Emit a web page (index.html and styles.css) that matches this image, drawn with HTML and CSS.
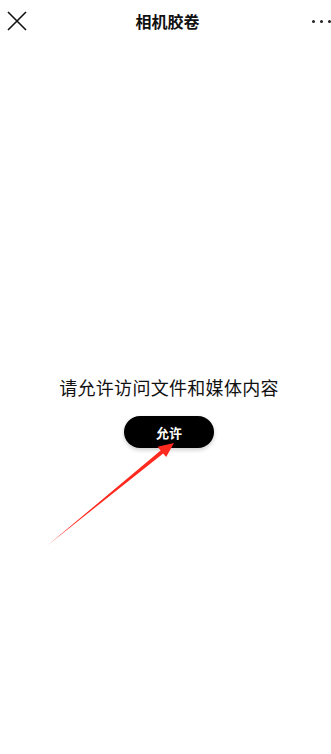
FILE: index.html
```html
<!DOCTYPE html>
<html lang="zh-CN">
<head>
    <meta charset="UTF-8">
    <meta name="viewport" content="width=device-width, initial-scale=1.0">
    <title>相机胶卷</title>
    <link rel="stylesheet" href="styles.css">
</head>
<body>
    <div class="header">
        <button class="icon-btn close-btn" aria-label="关闭">
            <svg width="20" height="20" viewBox="0 0 20 20">
                <path d="M1 1 L19 19 M19 1 L1 19" stroke="#111" stroke-width="1.6" fill="none"/>
            </svg>
        </button>
        <h1>相机胶卷</h1>
        <button class="icon-btn more-btn" aria-label="更多">
            <span></span><span></span><span></span>
        </button>
    </div>

    <div class="content">
        <p class="message">请允许访问文件和媒体内容</p>
        <button class="allow-btn">允许</button>
    </div>

    <!-- annotation arrow -->
    <svg class="annotation" width="331" height="754" viewBox="0 0 331 754">
        <polygon fill="#ff2a1f" points="48,545 160.6,450.6 157.6,446.8 174,443 166.2,457 163.2,453.4"/>
    </svg>
</body>
</html>
```

FILE: styles.css
```css
body {
    margin: 0;
    width: 331px;
    height: 754px;
    background-color: #fff;
    font-family: "Noto Sans CJK SC", "Noto Sans", sans-serif;
    color: #111;
    position: relative;
    overflow: hidden;
}
.header {
    height: 42px;
    display: flex;
    align-items: center;
    justify-content: space-between;
    padding: 0 0 0 7px;
}
.header h1 {
    font-size: 16px;
    font-weight: bold;
    margin: 0 0 0 -4px;
    color: #111;
}
.icon-btn {
    background: none;
    border: none;
    padding: 0;
    display: flex;
    align-items: center;
    cursor: pointer;
}
.close-btn {
    width: 20px;
    height: 20px;
}
.more-btn {
    width: 22px;
    gap: 5px;
    justify-content: flex-start;
    margin-right: -3px;
}
.more-btn span {
    width: 3px;
    height: 3px;
    border-radius: 50%;
    background-color: #222;
    flex-shrink: 0;
}
.content {
    display: flex;
    flex-direction: column;
    align-items: center;
    padding-top: 333px;
}
.message {
    font-size: 18px;
    margin: 0 0 17px 7px;
    letter-spacing: 0.3px;
    line-height: 24px;
}
.allow-btn {
    width: 90px;
    height: 32px;
    border: none;
    border-radius: 16px;
    background-color: #000;
    color: #fff;
    font-family: inherit;
    font-size: 13px;
    font-weight: bold;
    box-shadow: 0 2px 4px rgba(0,0,0,0.2);
    margin-left: 7px;
}
.annotation {
    position: absolute;
    left: 0;
    top: 0;
    pointer-events: none;
}
```
